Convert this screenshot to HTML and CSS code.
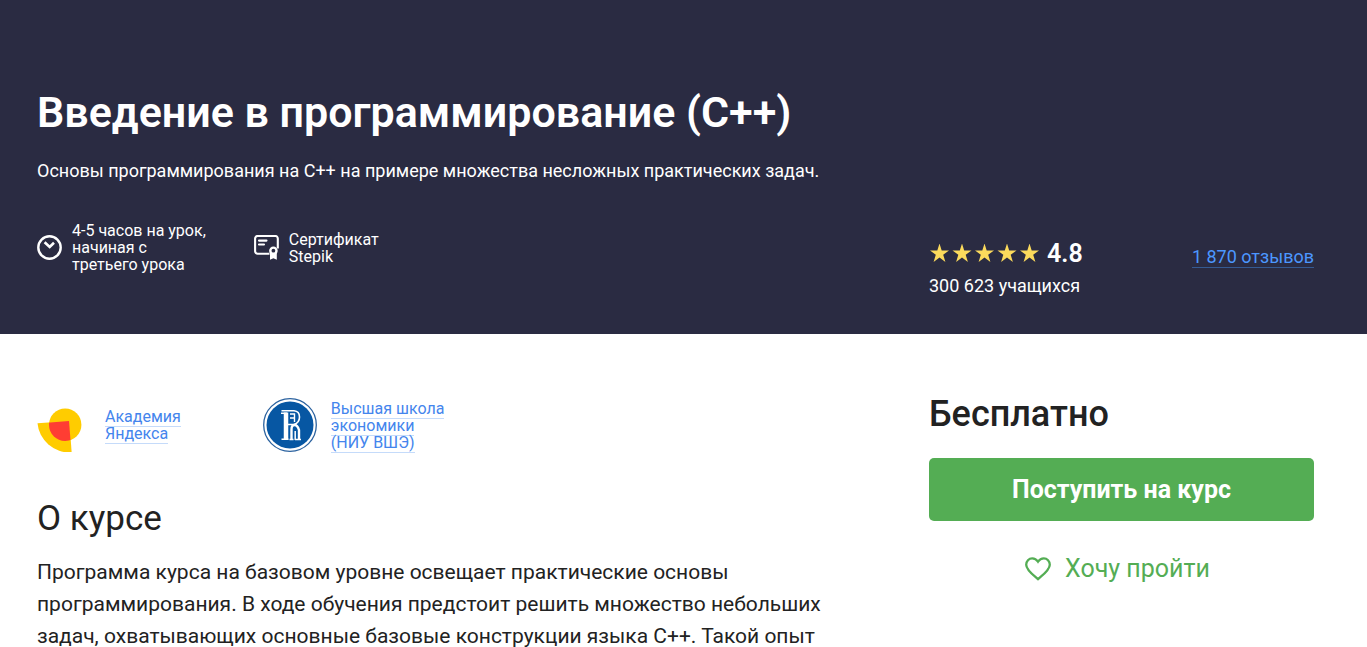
FILE: index.html
```html
<!DOCTYPE html>
<html lang="ru">
<head>
  <meta charset="utf-8">
  <meta name="viewport" content="width=device-width, initial-scale=1">
  <title>Введение в программирование (C++)</title>
  <link rel="stylesheet" href="styles.css">
</head>
<body>
  <header class="hero">
    <div class="container">
      <h1 class="hero-title">Введение в программирование (C++)</h1>
      <p class="hero-summary">Основы программирования на С++ на примере множества несложных практических задач.</p>

      <div class="columns">
        <ul class="features">
          <li class="feature">
            <svg class="feature-icon" viewBox="0 0 25 25" aria-hidden="true">
              <circle cx="12.5" cy="12.5" r="11.2" fill="none" stroke="#fff" stroke-width="2.4"/>
              <path d="M7.6 7.2l5.1 4.8 4.3-4.2" fill="none" stroke="#fff" stroke-width="2.6"/>
            </svg>
            <span>4-5 часов на урок,<br>начиная с<br>третьего урока</span>
          </li>
          <li class="feature">
            <svg class="feature-icon" viewBox="0 0 25 25" aria-hidden="true">
              <path d="M15.5 18.8H3.6a2.5 2.5 0 0 1-2.5-2.5V3.5A2.5 2.5 0 0 1 3.6 1h17.7a2.5 2.5 0 0 1 2.5 2.5v10" fill="none" stroke="#fff" stroke-width="2.1"/>
              <path d="M5 5.6h7.5M5 9.5h5" stroke="#fff" stroke-width="2.1" stroke-linecap="round"/>
              <circle cx="19.4" cy="15.7" r="3.1" fill="none" stroke="#fff" stroke-width="2.4"/>
              <path d="M16 18h6.800v6.800l-3.400-1.500-3.400 1.500z" fill="#fff"/>
            </svg>
            <span>Сертификат<br>Stepik</span>
          </li>
        </ul>

        <div class="stats">
          <div class="rating">
            <svg class="stars" viewBox="0 0 110 18" role="img" aria-label="Рейтинг 4.8 из 5">
              <defs>
                <path id="star" d="M10.500-.5l2.200 7h7.300l-5.800 4.300 2.200 7.200-5.900-4.400-5.900 4.400 2.200-7.200L1 6.500h7.300z"/>
              </defs>
              <g fill="#fbda5c">
                <use href="#star"/>
                <use href="#star" x="22.5"/>
                <use href="#star" x="45"/>
                <use href="#star" x="67.5"/>
                <use href="#star" x="90"/>
              </g>
            </svg>
            <strong class="score">4.8</strong>
            <a class="reviews" href="#reviews">1 870 отзывов</a>
          </div>
          <p class="learners">300 623 учащихся</p>
        </div>
      </div>
    </div>
  </header>

  <main class="container columns course">
    <div class="content">
      <ul class="authors">
        <li class="author">
          <svg class="author-logo" viewBox="0 0 54 54" aria-hidden="true">
            <defs>
              <clipPath id="sector"><path d="M.5 25.5L32 23l2.500 32A32 32 0 0 1 .5 25.500z"/></clipPath>
            </defs>
            <path d="M.5 25.300L32.300 23l2.400 31.800A34 32 0 0 1 .5 25.300z" fill="#fc0"/>
            <circle cx="28.2" cy="26.8" r="16.2" fill="#fc0"/>
            <circle cx="28.2" cy="26.8" r="16.2" fill="#ff3d33" clip-path="url(#sector)"/>
          </svg>
          <span class="author-name"><a href="#yandex">Академия<br>Яндекса</a></span>
        </li>
        <li class="author">
          <svg class="author-logo" viewBox="0 0 54 54" aria-hidden="true">
            <circle cx="27" cy="27" r="26.3" fill="#fff" stroke="#2b629f" stroke-width="1.3"/>
            <circle cx="27" cy="27" r="23.5" fill="#0757a3"/>
            <g fill="none" stroke="#fff">
              <path d="M18.500 12.800h12.500q5.500 .5 5.500 6.200t-5.500 7.500h-6" stroke-width="1.600"/>
              <path d="M18 15.200h6M18.500 41.300h7" stroke-width="1.600"/>
              <path d="M23 14.500v27" stroke-width="4.500"/>
              <path d="M27 16h4.500v8M27 20h4.500" stroke-width="1.400"/>
              <path d="M28.500 42V31.500q0-4.500 3-4.500t4.500 5v10" stroke-width="2.400"/>
              <path d="M32.200 33v9M26.500 41.500h4M32 41.500h6" stroke-width="1.500"/>
            </g>
          </svg>
          <span class="author-name"><a href="#hse">Высшая школа<br>экономики<br>(НИУ ВШЭ)</a></span>
        </li>
      </ul>

      <section class="about">
        <h2 class="about-title">О курсе</h2>
        <p class="about-text">Программа курса на базовом уровне освещает практические основы<br>программирования. В ходе обучения предстоит решить множество небольших<br>задач, охватывающих основные базовые конструкции языка С++. Такой опыт</p>
      </section>
    </div>

    <aside class="enroll">
      <p class="price">Бесплатно</p>
      <button class="join" type="button">Поступить на курс</button>
      <button class="wish" type="button">
        <svg class="heart" viewBox="0 0 26 24" aria-hidden="true">
          <path d="M13 22.200C8.500 18.200 1.200 13 1.200 7.700c0-3.600 2.700-6.300 6-6.300 2.300 0 4.400 1.200 5.800 3.300 1.400-2.100 3.500-3.300 5.800-3.300 3.300 0 6 2.700 6 6.300 0 5.300-7.300 10.500-11.800 14.500z" fill="none" stroke="#54ad54" stroke-width="2.3"/>
        </svg>
        Хочу пройти
      </button>
    </aside>
  </main>
</body>
</html>
```
FILE: styles.css
```css
/* Reset */
* {
  box-sizing: border-box;
}

body, h1, h2, p, ul {
  margin: 0;
  padding: 0;
}

ul {
  list-style: none;
}

body {
  font-family: Roboto, "Liberation Sans", sans-serif;
  font-size: 18px;
  color: #222;
  background: #fff;
}

a {
  color: #4485ed;
  text-decoration: none;
  border-bottom: 1px solid #c5dbfa;
}

button {
  font-family: inherit;
  border: none;
  cursor: pointer;
}

/* Layout */
.container {
  padding: 0 53px 0 37px;
}

.columns {
  display: grid;
  grid-template-columns: minmax(0, 1fr) 385px;
  column-gap: 48px;
}

/* Hero */
.hero {
  padding: 84px 0 30px;
  background: #2a2b42;
  color: #fff;
}

.hero-title {
  font-size: 43px;
  line-height: 56px;
  font-weight: 600;
}

.hero-summary {
  margin: 18px 0 38px;
  line-height: 26px;
}

.features {
  display: flex;
  align-items: center;
  align-self: start;
  gap: 48px;
}

.feature {
  display: flex;
  align-items: center;
  gap: 10px;
  font-size: 16px;
  line-height: 17px;
}

.feature-icon {
  flex: none;
  width: 25px;
  height: 25px;
}

/* Rating */
.stats {
  padding-top: 16px;
}

.rating {
  display: flex;
  align-items: center;
  height: 30px;
}

.stars {
  width: 110px;
  height: 18px;
}

.score {
  margin-left: 8px;
  font-size: 25px;
  font-weight: 600;
}

.reviews {
  align-self: flex-end;
  margin-left: auto;
  color: #4c97ff;
  border-bottom-color: #355a92;
}

.learners {
  line-height: 36px;
}

/* Course */
.course {
  padding-top: 56px;
}

.authors {
  display: flex;
  gap: 82px;
}

.author {
  display: flex;
  align-items: center;
  gap: 14px;
  height: 70px;
  font-size: 16px;
  line-height: 17px;
}

.author-logo {
  flex: none;
  width: 54px;
  height: 54px;
}

.about {
  margin-top: 37px;
}

.about-title {
  font-size: 35px;
  line-height: 44px;
  font-weight: 400;
}

.about-text {
  margin-top: 15px;
  font-size: 21px;
  line-height: 32px;
}

/* Enroll */
.price {
  font-size: 36px;
  line-height: 48px;
  font-weight: 500;
}

.join {
  display: block;
  width: 100%;
  height: 63px;
  margin-top: 20px;
  border-radius: 5px;
  background: #54ad54;
  color: #fff;
  font-size: 25px;
  font-weight: 700;
}

.wish {
  display: flex;
  align-items: center;
  justify-content: center;
  gap: 14px;
  width: 100%;
  margin-top: 32px;
  padding: 0 8px 0 0;
  background: none;
  color: #54ad54;
  font-size: 25px;
  line-height: 32px;
}

.heart {
  width: 26px;
  height: 24px;
}
```
